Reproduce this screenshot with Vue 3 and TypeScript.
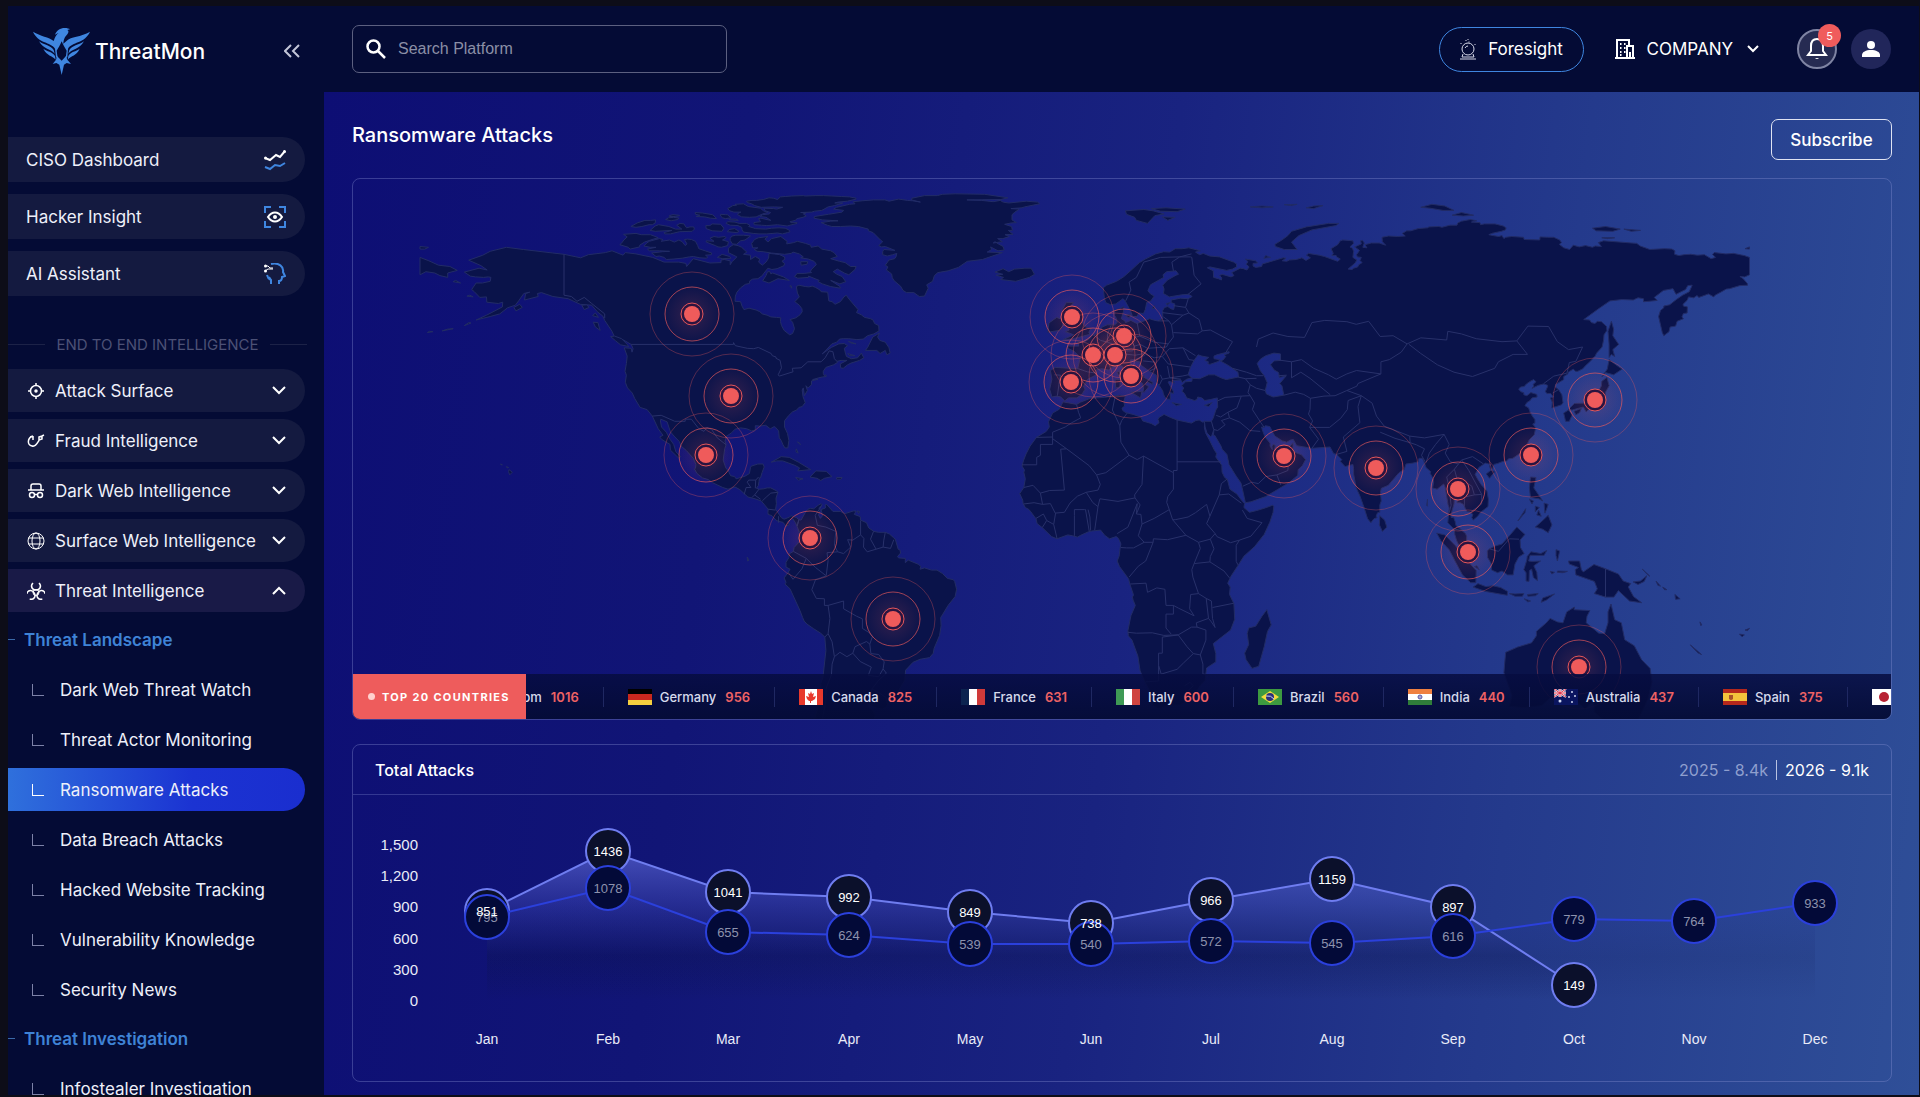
<script setup lang="ts">
interface Series { id: string; values: number[] }
interface TickerItem { code: string; name: string; value: number }

const months = ['Jan', 'Feb', 'Mar', 'Apr', 'May', 'Jun', 'Jul', 'Aug', 'Sep', 'Oct', 'Nov', 'Dec']
const ticks = [1500, 1200, 900, 600, 300, 0]
const current: Series = { id: 'current', values: [851, 1436, 1041, 992, 849, 738, 966, 1159, 897, 149] }
const previous: Series = { id: 'previous', values: [795, 1078, 655, 624, 539, 540, 572, 545, 616, 779, 764, 933] }

const px = (i: number): number => Math.round(134 + (i * 1328) / 11)
const py = (v: number): number => Math.round(205 - (v * 156) / 1500)
const linePath = (s: Series): string => s.values.map((v, i) => `${i ? 'L' : 'M'}${px(i)} ${py(v)}`).join('')
const areaPath = (s: Series): string => `${linePath(s)}L${px(s.values.length - 1)} 205L${px(0)} 205Z`

const topItems = [
  { id: 'ciso', label: 'CISO Dashboard' },
  { id: 'hacker', label: 'Hacker Insight' },
  { id: 'ai', label: 'AI Assistant' },
]
const sections = [
  { id: 'attack', label: 'Attack Surface' },
  { id: 'fraud', label: 'Fraud Intelligence' },
  { id: 'dark', label: 'Dark Web Intelligence' },
  { id: 'surface', label: 'Surface Web Intelligence' },
  { id: 'threat', label: 'Threat Intelligence', open: true },
]
const groups = [
  {
    title: 'Threat Landscape',
    links: ['Dark Web Threat Watch', 'Threat Actor Monitoring', 'Ransomware Attacks', 'Data Breach Attacks', 'Hacked Website Tracking', 'Vulnerability Knowledge', 'Security News'],
  },
  { title: 'Threat Investigation', links: ['Infostealer Investigation'] },
]
const activeLink = 'Ransomware Attacks'

const ticker: TickerItem[] = [
  { code: 'gb', name: 'United Kingdom', value: 1016 },
  { code: 'de', name: 'Germany', value: 956 },
  { code: 'ca', name: 'Canada', value: 825 },
  { code: 'fr', name: 'France', value: 631 },
  { code: 'it', name: 'Italy', value: 600 },
  { code: 'br', name: 'Brazil', value: 560 },
  { code: 'in', name: 'India', value: 440 },
  { code: 'au', name: 'Australia', value: 437 },
  { code: 'es', name: 'Spain', value: 375 },
  { code: 'jp', name: 'Japan', value: 338 },
]

// Marker centres on the map canvas
const markers: [number, number][] = [
  [339, 135], [378, 217], [353, 276], [457, 359], [540, 440],
  [719, 138], [771, 157], [740, 176], [762, 176], [718, 203], [778, 197],
  [931, 277], [1023, 289], [1242, 221], [1178, 276], [1105, 310], [1115, 373], [1226, 488],
]

// Land outlines as "lon,lat" lists, drawn on an equirectangular canvas
const land: string[] = [
  // North and Central America
  '-168,65.6 -164,66.5 -161.8,66.1 -163.5,67.1 -166.8,68.35 -163,69.5 -161,70.4 -156.6,71.3 -152,70.8 -144,70 -141,69.7 -136.5,68.9 -134.4,69.6 -129.8,70.1 -128,70.5 -125,69.5 -124.4,70.1 -121.5,69.8 -117,69 -115,68.3 -113.9,67.9 -109.9,67.9 -108,67.6 -107.8,66.9 -106,68.7 -101.5,67.7 -98.5,67.8 -98.5,68.4 -97.6,68.5 -96,68.2 -96,67.3 -95.5,68 -94.2,69.1 -96.5,70.1 -96.4,71.2 -95.2,71.9 -93.9,71.7 -92.9,71.3 -91.5,70.2 -92.4,69.7 -90.5,69.5 -90.5,68.5 -89.2,69.2 -88,68.6 -88.3,67.9 -87.3,67.2 -86.3,67.9 -85.6,68.8 -85.5,69.9 -84.1,69.8 -82.6,69.6 -81.3,69.1 -81.2,68.6 -82,68.1 -81.3,67.6 -81.4,67.1 -83.3,66.4 -84.7,66.2 -85.8,66.5 -87,65.2 -87.3,64.8 -88.5,64.1 -89.9,64 -90.7,63.6 -90.8,63 -91.9,62.8 -93.2,62 -94.2,61 -94.6,60.1 -94.7,58.9 -93.2,58.8 -92.8,57.8 -92.3,57 -90.9,57.3 -89,56.9 -88,56.5 -87.3,56 -86,55.7 -85,55.3 -83.4,55.2 -82.3,55.1 -82.4,54.3 -82.1,53.3 -81.4,52.2 -79.9,51.2 -79.1,51.5 -78.6,52.6 -79.1,54.1 -79.8,54.7 -78.2,55.1 -77.1,55.8 -76.5,56.5 -76.6,57.2 -77.3,58 -78.5,58.8 -77.3,59.9 -77.8,60.8 -78.1,62.3 -77.4,62.6 -75.7,62.3 -74.7,62.2 -73.8,62.4 -72.9,62.1 -71.7,61.5 -71.4,61.1 -69.6,61 -69.3,59 -68.4,58.8 -67.6,58.2 -66.2,58.8 -65.2,59.9 -64.6,60.3 -63.8,59.4 -61.4,57 -61.8,56.3 -60.5,55.8 -59.6,55.2 -58,54.9 -57.3,54.6 -56.9,53.8 -55.8,53.3 -55.7,52.1 -57.1,51.4 -58.8,51 -60,50.2 -61.7,50.1 -63.9,50.3 -65.4,50.3 -66.4,50.2 -67.2,49.5 -68.5,49.1 -70,47.7 -71.1,46.8 -68.6,48.3 -66.6,49.1 -65.1,49.2 -64.2,48.7 -65.1,48.1 -64.8,47 -64.5,46.2 -63.2,45.7 -61.5,45.9 -60.5,47 -59.8,45.9 -61,45.3 -63.3,44.7 -64.2,44.3 -65.4,43.5 -66.1,43.6 -66.2,44.5 -64.4,45.3 -66,45.3 -67.1,45.1 -67,44.8 -68,44.3 -70.1,43.7 -70.8,42.8 -70.8,42.3 -70.5,41.8 -70.1,42 -70,41.6 -71.1,41.5 -72,41.3 -73.7,40.9 -72.2,41 -74,40.6 -74,39.7 -74.9,39 -75.5,39.5 -75.1,38.4 -75.9,37.2 -76.2,39 -76.5,38.5 -76.3,37 -75.7,35.6 -76.5,34.7 -77.4,34.5 -78,33.9 -79.1,33.5 -80.3,32.5 -81.3,31.4 -81.3,30 -80.5,28.5 -80.1,26.9 -80.4,25.2 -81.2,25.2 -81.7,25.9 -82.2,26.9 -82.7,27.5 -82.9,29.1 -83.7,29.9 -84.1,30.1 -85.1,29.6 -85.3,29.7 -86.4,30.4 -88,30.2 -89.2,30.3 -89.2,29.3 -90.2,29.1 -91.6,29.6 -93.2,29.8 -94.7,29.5 -95.6,28.7 -97.1,27.8 -97.4,26.7 -97.1,25.9 -97.5,25 -97.9,22.4 -97.2,20.6 -96.5,19.9 -95.9,18.8 -94.8,18.6 -94.4,18.1 -92,18.7 -90.8,19.3 -90.5,20.7 -90.3,21 -88.5,21.5 -87.1,21.5 -86.8,20.8 -87.4,19.5 -87.8,18.3 -88.1,18.3 -88.2,17.5 -88.4,16.5 -88.9,15.9 -88.1,15.7 -86.9,15.8 -86,16 -85,16 -83.4,15.3 -83.1,15 -83.6,13.6 -83.5,12.4 -83.7,11.1 -82.2,9.2 -81.4,8.8 -79.9,9.3 -79.6,9.6 -78.1,9.2 -77.4,8.7 -77.9,7.2 -78.4,8.1 -79.1,9 -80.4,8.3 -80,7.5 -80.9,7.2 -81.7,8.1 -82.9,8.3 -83.6,8.6 -84.7,9.6 -85.7,9.9 -85.8,10.4 -85.7,11.1 -87.6,13 -89.3,13.5 -91.2,13.9 -93.4,15.6 -94.7,16.2 -96.6,15.7 -98,16.1 -100.8,17.2 -101.9,17.9 -103.5,18.3 -105,19.3 -105.7,20.4 -105.4,20.5 -105.3,21.4 -106,22.8 -107.9,24.6 -109.3,25.6 -109.8,26.7 -111.2,27.9 -112.2,28.9 -113.1,31.2 -114.8,31.8 -114.9,31.4 -114.6,30 -113.3,28.8 -112.3,27.2 -111.3,26 -110.7,24.3 -109.4,23.2 -110,22.9 -112.2,24.7 -112.3,26 -114.5,27.1 -115.1,27.7 -114.2,28.1 -115.5,29.6 -117.1,32.5 -118.5,34 -120.4,34.5 -121.9,36.6 -122.5,37.8 -123.8,39 -124.4,40.3 -124.1,41.9 -124.5,42.8 -124.1,44.6 -123.9,46.3 -124.7,48.2 -122.8,48.1 -122.6,47.2 -122.3,48 -122.8,49 -124.9,50 -127.4,50.8 -128,52 -130,54.5 -130.5,55.5 -132,56.5 -133.5,58 -136.6,58.2 -139.9,59.5 -144,60 -147.1,60.9 -148.2,60.7 -148,60 -151.7,59.2 -151.4,60.7 -150.3,61 -151.9,60.7 -153.3,59 -154.2,58 -156.3,57.4 -158.4,56 -161,55.4 -164.8,54.6 -162,55.7 -157.7,57.6 -157.6,58.7 -158.8,58.4 -161.9,58.7 -162,59.9 -163.8,59.8 -165.3,61.1 -166,61.6 -164.8,63.1 -163.1,63.1 -161,63.5 -160.8,64.4 -161.5,64.5 -162.8,64.4 -165,64.5 -166.4,64.7',
  // Canadian Arctic
  '-62.2,66.2 -63.9,65 -65.1,65.4 -67,66.3 -68.1,65.7 -67.1,65.1 -65.7,64.6 -64.7,63.4 -66.3,62.9 -68.8,63.7 -66.3,62.3 -66.2,61.9 -68.9,62.3 -71,62.9 -72.2,63.4 -71.9,63.7 -74.8,64.7 -74.8,64.4 -77.7,64.2 -78.6,64.6 -77.9,65.3 -76,65.3 -74,65.5 -74.3,65.8 -73.9,66.3 -72.7,67.3 -72.9,67.7 -73.3,68.1 -74.8,68.6 -76.9,68.9 -76.2,69.1 -77.3,69.8 -79,70.2 -79.5,69.9 -81.3,69.7 -84.9,70 -87.1,70.3 -88.7,70.4 -89.5,70.8 -88.5,71.2 -89.9,71.2 -90.2,72.2 -89.4,73.1 -88.4,73.5 -85.8,73.8 -86.6,73.2 -85.8,72.5 -84.8,73.3 -82.3,73.8 -80.6,72.7 -80.7,72.1 -78.8,72.4 -77.8,72.7 -75.6,72.2 -74.2,71.8 -74.1,71.3 -72.2,71.6 -71.2,70.9 -68.8,70.5 -67.9,70.1 -67,69.2 -68.8,68.7 -66.4,68.1 -64.9,67.8 -63.4,66.9 -61.9,66.9',
  '-114.2,73.1 -114.7,72.7 -112.4,73 -111.1,72.5 -109.9,73 -109,72.6 -108.2,71.7 -107.7,72.1 -108.4,73.1 -107.5,73.2 -106.5,73.1 -105.4,72.7 -104.8,71.7 -104.5,71 -102.8,70.5 -101,70 -101.1,69.6 -102.7,69.5 -102.1,69.1 -102.4,68.8 -104.2,68.9 -106,69.2 -107.1,69.1 -109,68.8 -111.5,68.6 -113.3,68.5 -113.9,69 -115.2,69.3 -116.1,69.2 -117.3,70 -114.3,70.3 -112.4,70.4 -115.1,70.5 -117.9,70.5 -118.4,70.9 -116.1,71.3 -117.7,71.3 -119.4,71.6 -118.6,72.3 -117.9,72.7 -115.2,73.3',
  '-125.5,72.2 -124.8,73 -123.9,73.7 -124.9,74.3 -121.5,74.5 -120.1,74.2 -117.6,74.2 -116.6,73.9 -115.5,73.5 -116.8,73.2 -119.2,72.5 -120.5,71.8 -120.5,71.4 -123.1,70.9 -123.6,71.3 -125.9,71.9',
  '-100.4,73.8 -99.2,73.6 -97.4,73.8 -97.1,73.5 -98.1,73 -96.5,72.6 -96.7,71.7 -98.4,71.3 -99.3,71.4 -100,71.7 -102.5,72.5 -102.5,72.8 -100.4,72.7 -101.5,73.4',
  '-93.2,72.8 -94.3,72 -95.4,72.1 -96,72.9 -96,73.4 -95.5,73.9 -94.5,74.1 -92.4,74.1 -90.5,73.9 -92,73',
  '-99.5,69 -98.2,69.7 -96.2,69.2 -95.8,68.8 -98,68.7',
  '-108.2,76.2 -107.8,75.8 -106.9,76 -105.9,76 -105.7,75.5 -106.3,75 -109.7,74.9 -112.2,74.4 -113.7,74.4 -113.9,74.7 -111.8,75.2 -116.3,75 -117.7,75.2 -116.3,76.2 -115.4,76.5 -112.6,76.1 -110.8,75.5 -109.1,75.5 -110.5,76.4 -109.6,76.8 -108.5,76.7',
  '-98.2,75 -100.9,75.1 -102.5,75.6 -102.6,76.3 -101.5,76.3 -100.9,76.7 -98.6,76.6 -97.7,75.7',
  '-93.6,75 -94.2,74.7 -96.8,74.9 -96.3,75.4 -94.8,75.6',
  '-89.2,75.6 -86.4,75.5 -84.8,75.7 -82.8,75.8 -81.1,75.7 -80.1,75.3 -79.8,74.9 -80.5,74.7 -81.9,74.4 -83.2,74.6 -86.1,74.4 -88.2,74.4 -89.8,74.5 -92.4,74.8 -92.8,75.4 -92.9,75.9 -93.9,76.3 -96,76.4 -97.1,76.8 -96.7,77.2 -94.7,77.1 -93.6,76.8 -91.6,76.8 -90.7,76.4 -91,76.1 -89.8,75.8',
  '-116.2,77.6 -116.3,76.9 -117.1,76.5 -118,76.5 -119.9,76.1 -121.5,75.9 -122.9,76.1 -121.2,76.9 -119.1,77.5 -117.6,77.5',
  '-110.2,77.7 -112,77.4 -113.5,77.7 -112.7,78.1 -111.3,78.2 -109.9,78',
  '-109.7,78.6 -110.9,78.4 -112.5,78.4 -112.5,78.6 -111.5,78.8 -110,78.7',
  '-95.8,78.1 -97.3,77.9 -98.1,78.1 -98.6,78.5 -98.6,78.9 -97.3,78.8 -96.8,78.8',
  '-100.1,78.3 -99.7,77.9 -101.3,78 -102.9,78.3 -105.2,78.4 -104.2,78.7 -105.4,78.9 -105.5,79.3 -103.5,79.2 -100.8,78.8',
  '-93.8,77.5 -96.1,77.6 -96.4,77.8 -94.4,77.8',
  '-87,79.7 -85.8,79.3 -87.2,79 -89,78.3 -90.8,78.2 -92.9,78.3 -94,78.8 -93.9,79.1 -93.1,79.4 -95,79.4 -96.1,79.7 -96.7,80.2 -95.3,80.9 -94.3,81 -94.7,81.2 -92.4,81.3 -91.1,80.7 -87.8,80.3',
  '-68.5,83.1 -65.8,83 -63.7,82.9 -61.9,82.6 -61.9,82.4 -64.3,81.9 -66.8,81.7 -67.7,81.5 -65.5,81.5 -67.8,80.9 -69.5,80.6 -71.2,79.8 -73.2,79.6 -73.9,79.4 -76.9,79.3 -75.5,79.2 -76.2,79 -75.4,78.5 -76.3,78.2 -77.9,77.9 -78.4,77.5 -79.8,77.2 -79.6,77 -77.9,77 -77.9,76.8 -80.6,76.2 -83.2,76.5 -86.1,76.3 -87.6,76.4 -89.5,76.5 -89.6,77 -87.8,77.2 -88.3,77.9 -87.7,78 -85,77.5 -86.3,78.2 -88,78.4 -87.2,78.8 -85.4,79 -85.1,79.3 -86.5,79.7 -86.9,80.3 -84.2,80.2 -83.4,80.1 -81.8,80.5 -84.1,80.6 -87.6,80.5 -89.4,80.9 -90.2,81.3 -91.4,81.6 -91.6,81.9 -90.1,82.1 -88.9,82.1 -87,82.3 -85.5,82.7 -84.3,82.6 -83.2,82.3 -82.4,82.9 -81.1,83 -79.3,83.1 -76.2,83.2 -75.7,83.1 -72.8,83.2 -70.7,83.2',
  '-85.9,65.7 -85.2,65.7 -85,65.2 -84.5,65.4 -81.6,64.5 -80,63.7 -83.1,64.1 -85.5,63.1 -87.2,63.6 -86.3,64.8',
  '-79.9,62.4 -79.3,61.9 -79.5,62.5', '-76.9,68 -75,68 -75.2,67.4 -76.8,67.2',
  '-55.6,51.6 -56.1,50.7 -55.5,49.9 -54,49.5 -53,48.2 -52.7,47 -53.6,46.6 -54,47.6 -55.4,46.9 -56.3,47.6 -59.4,47.6 -58.8,48.3 -57.4,50.7',
  '-123.5,48.5 -125.7,48.9 -127,49.8 -128.4,50.8 -127.3,50.9 -125.4,50.3 -123.9,49',
  '-131.5,53 -131.2,52.2 -132.5,53 -133.1,54.1 -131.8,54', '-134.2,57.5 -135.5,57 -136.2,58 -134.9,58.1', '-132.5,56.2 -131.7,55.2 -133.3,55.6',
  '-154,56.7 -152.3,57.5 -153,58.2 -154.6,57.5', '-166.5,60.3 -165.6,59.9 -167.3,60.1',
  '-171,63.4 -169,63.1 -170.4,63.7', '-168,53.3 -166.2,53.9 -166.8,54', '-174,52.1 -171,52.6 -172.5,52.5', '-178,51.7 -176.5,51.9 -177.5,52',
  '-64,49.7 -61.9,49.1 -63.3,49.3', '-64.2,46.9 -62.2,46.4 -63.6,46.4',
  // Greenland and Iceland
  '-46.8,82.6 -43.4,83.2 -39.9,83.2 -38.6,83.5 -35.1,83.6 -27.1,83.5 -20.8,82.7 -22.7,82.3 -31.9,82.2 -27.9,82.1 -24.8,81.8 -22.9,82.1 -22.1,81.7 -20.6,81.5 -15.8,81.9 -12.8,81.7 -12.2,81.3 -16.3,80.6 -17,80.4 -20,80.2 -17.7,80.1 -18.9,79.4 -19.7,78.8 -19.7,77.6 -18.5,77 -20,76.9 -21.7,76.6 -19.8,76.1 -19.6,75.2 -20.7,75.2 -19.4,74.3 -21.6,74.2 -20.4,73.8 -22.2,73.3 -23.6,73.3 -22.3,72.6 -24.8,72.3 -24.3,72.6 -23.4,72.1 -22.1,71.5 -21.8,70.7 -23.5,70.5 -25.5,71.4 -25.2,70.8 -26.4,70.2 -22.3,70.1 -27.7,68.5 -31.8,68.1 -34.2,66.7 -37,65.9 -39.8,65.5 -40.7,64.8 -41.2,63.5 -42.8,62.7 -42.4,61.9 -43.4,60.1 -44.8,60 -46.3,60.9 -48.3,60.9 -49.2,61.4 -49.9,62.4 -51.6,63.6 -52.1,64.3 -52.3,65.2 -53.7,66.1 -53.3,66.8 -54,67.2 -53,68.4 -51.5,68.7 -51.1,69.1 -50.9,69.9 -52,69.6 -53.5,69.3 -54.7,69.6 -54.7,70.3 -54.4,70.8 -51.4,70.6 -54,71.5 -55,71.4 -55.8,71.7 -54.7,72.6 -55.3,73 -57.3,74.7 -58.6,75.1 -58.6,75.5 -61.3,76.1 -63.4,76.2 -66.1,76.1 -68.5,76.1 -69.7,76.4 -71.4,77 -68.8,77.3 -66.8,77.4 -71,77.6 -73.3,78 -73.2,78.4 -69.4,78.9 -65.7,79.4 -65.3,79.8 -68,80.1 -67.2,80.5 -63.7,81.2 -62.2,81.3 -62.7,81.8 -60.3,82 -57.2,82.2 -54.1,82.2 -53,81.9 -50.4,82.4 -48,82.1 -46.6,82 -44.5,81.7 -46.9,82.2',
  '-14.5,66.5 -13.6,65.1 -15,64.4 -18.7,63.5 -22.8,63.9 -22,64.4 -24,64.9 -22.2,65.1 -24.3,65.6 -22.1,66.4 -20.6,65.7 -19,66.3 -16.2,66.5',
  // Caribbean and Hawaii
  '-84.9,21.9 -82.2,23.2 -80,23 -77.5,21.9 -74.2,20.2 -77.7,19.9 -77.2,20.6 -78.5,21.2 -81.8,22.2 -83.4,22.2', '-74.4,18.5 -72.8,19.9 -70,19.8 -68.4,18.6 -70.5,18.2 -71.5,17.7 -72.5,18.2', '-78.3,18.4 -76.3,18.1 -77.5,17.8', '-67.2,18.4 -65.7,18.4 -66,18 -67.2,18', '-78.1,25 -77.6,24 -78.2,24.3', '-77.8,26.6 -77.1,26.2 -77,25.9',
  '-155.9,20.2 -155,19.6 -155.7,19 -156,19.7', '-156.6,20.9 -156,20.7 -156.4,20.6', '-158.2,21.5 -157.7,21.3 -158,21.3', '-91.4,0.1 -90.9,-0.6 -91.3,-0.8', '-61.7,10.7 -61,10.6 -61.2,10.1',
  // South America
  '-77.4,8.7 -76.8,8.6 -75.5,10.6 -74.9,11.1 -74.2,11.3 -73.4,11.2 -72.2,12 -71.4,12.4 -71.1,12.1 -72,11.4 -71.6,10.9 -72.1,9.8 -71.6,9 -71,9.6 -71.4,11 -70.2,11.4 -70.3,12.1 -69.9,12.2 -68.2,10.6 -66.2,10.6 -64.9,10.1 -62.7,10.7 -61.9,10.7 -62.4,9.9 -60.8,9.4 -60.7,8.6 -59.1,8 -58.5,6.8 -57.1,6 -55.9,5.8 -54,5.8 -52.9,5.4 -51.8,4.6 -51.3,4.2 -50.5,1.9 -50,1.7 -49.9,1 -50.7,0.2 -50.4,-0.1 -48.6,-0.2 -48.6,-1.2 -47.8,-0.6 -44.9,-1.6 -44.4,-2.1 -44.6,-2.7 -43.4,-2.4 -41.5,-2.9 -40,-2.9 -38.5,-3.7 -37.2,-4.8 -35.6,-5.1 -35.2,-5.5 -34.7,-7.3 -35.1,-9 -37,-11 -38.4,-13 -39,-13.8 -38.9,-15.7 -39.3,-17.9 -40.8,-20.9 -41,-22 -42,-23 -44.6,-23.4 -46.5,-24.1 -48.5,-25.9 -48.7,-28.2 -50.7,-31 -52.3,-32.2 -53.8,-34.4 -54.9,-34.9 -57.1,-34.4 -58.4,-33.9 -58.5,-34.4 -57.2,-35.3 -56.7,-36.4 -57.5,-38 -73.5,-38 -73.2,-37.1 -72.6,-35.5 -71.4,-32.4 -71.5,-29 -70.9,-27.6 -70.1,-21.4 -70.4,-18.3 -71.5,-17.4 -73.4,-16.4 -75.2,-15.3 -76,-14.6 -76.4,-13.8 -77.1,-12.2 -79.8,-7.2 -81.2,-6.1 -80.9,-5.7 -81.4,-4.7 -80.3,-3.4 -79.8,-2.7 -80.9,-2.2 -80.9,-1.1 -80.1,0 -80.1,0.8 -78.9,1.4 -78.7,2.3 -77.1,3.8 -77.5,4.1 -77.3,5.8 -77.9,7.2',
  // Africa and Madagascar
  '-5.9,35.8 -2.2,35.2 -1.2,35.7 1.5,36.6 5.3,36.8 9.5,37.3 11,37.1 10.6,35.9 10.8,34.8 10.1,34.3 10.3,33.8 11.1,33.3 13.1,32.9 15.2,32.3 15.7,31.4 18,30.8 19.1,30.3 20.1,31 19.8,31.8 20.1,32.2 21.5,32.9 23.2,32.2 25,31.6 28.9,30.9 30.1,31.5 31,31.6 32,31.1 32.5,31.3 32.4,29.9 32.7,28.7 33.9,26.8 35.1,24.7 35.7,23.9 35.5,23.1 37.1,21.2 37.2,19.6 37.9,18.4 38.6,18 39.3,15.7 41.2,14.6 42.3,13.3 43.3,12.4 43.1,11.5 44.6,10.4 46.6,10.8 48.9,11.4 50.8,12 51.2,11.8 51,10.4 50.1,8.1 48.6,5.3 46,2.5 43.1,0.3 41.6,-1.7 39.6,-4.3 38.7,-5.9 39.4,-6.8 39.2,-8.5 40.4,-10.6 40.6,-14.2 39.5,-16.7 36.3,-18.8 34.8,-19.8 35.5,-22.1 35.5,-24 33,-25.4 32.9,-26.2 32.6,-28.3 31.3,-29.4 30.1,-31.1 28.2,-32.8 25.8,-33.9 22.5,-34 20,-34.8 18.4,-34 18.2,-31.7 17.1,-29.9 16.3,-28.6 15,-26.1 14.4,-22.7 12.8,-19 11.8,-18 11.7,-16.8 12.5,-13.4 13.7,-11 13.1,-9.8 12.9,-9.1 13.2,-8.6 12.2,-6.1 11.9,-5 11.1,-4 9.4,-2.1 8.8,-0.8 9.3,0.3 9.6,2.3 9.8,3.1 9.4,3.9 8.9,4.6 8.5,4.8 6.7,4.3 5.4,5.1 4.3,6.3 1.9,6.1 1,5.9 -1.1,5.1 -2,4.7 -3.3,5 -4.6,5.2 -7.5,4.3 -9,4.8 -11.4,6.8 -12.9,7.8 -13.2,8.9 -13.7,9.5 -14.6,10.5 -15.1,11 -16.1,11.5 -16.7,12.4 -16.8,13.2 -17.6,14.7 -16.5,16.1 -16.1,18.1 -16.5,19.6 -16.3,20.1 -17,21 -16.6,22.2 -15.9,23.8 -14.8,25.6 -13.1,27.6 -10.4,29 -9.6,30 -9.8,31.2 -8.7,33.2 -6.9,34.1',
  '49.3,-12 50.5,-15.5 49.5,-17 48.6,-20.5 47.1,-25 45.3,-25.5 43.7,-23.5 43.3,-22 44.4,-20 44,-17.5 44.4,-16.2 46.3,-15.8 48,-13.5',
  // Eurasia, with the Caspian Sea left open
  '-9.5,38.7 -8.9,41 -9.3,43 -8,43.7 -1.9,43.4 -1.2,46 -2.9,47.4 -4.6,48.1 -4.5,48.6 -1.6,48.6 -1.9,49.7 -1,49.4 0.2,49.7 1.6,50.5 1.9,51 3.8,51.6 4.7,53 6.1,53.5 8.1,53.5 8.8,54 8.6,54.9 8.1,55.6 8.1,56.8 9.4,57.2 10.6,57.7 10.5,56.6 10.3,56 9.9,54.9 10.9,54.4 11,54 12.5,54.5 14.1,53.8 16.4,54.5 17.6,54.9 18.6,54.6 19.7,54.4 21.1,54.9 21.1,56.8 21.6,57.5 22.5,57.7 23.3,57.2 24.1,57 24.4,58.3 23.4,58.6 23.4,59.2 25.9,59.6 28,59.5 29.1,60 28.1,60.5 26.3,60.4 22.9,59.9 21.3,60.7 21.5,61.7 21.1,62.6 22.4,63.8 24.7,64.9 25.4,65.1 24.7,65.9 22.2,65.7 21.2,65 21.4,64.4 17.8,62.7 17.1,61.3 17.8,60.6 18.8,60.1 17.9,59 16.8,58.7 16.4,57 15.9,56.1 14.7,56.2 14.1,55.4 12.9,55.4 12.6,56.3 11,58.9 10.4,59.5 8.4,58.3 7,58.1 5.7,58.6 5.3,59.7 5,62 5.9,62.6 8.6,63.5 10.5,64.5 12.4,65.9 14.8,67.8 16.4,68.6 19.2,69.8 21.4,70.3 23,70.2 24.5,71 26.4,71 28.2,71.2 31.3,70.5 30,70.2 31.1,69.6 32.1,69.9 33.8,69.3 36.5,69.1 40.3,67.9 41.1,67.5 41.1,66.8 40,66.3 38.4,66 33.9,66.8 33.2,66.6 34.8,65.9 34.9,64.4 36.2,64.1 37,63.8 37.1,64.3 36.5,64.8 37.2,65.1 39.6,64.5 40.4,64.8 39.8,65.5 42.1,66.5 43,66.4 43.9,66.1 44.5,66.8 43.7,67.4 44.2,68 43.5,68.6 46.3,68.2 46.8,67.7 45.6,67.6 45.6,67 46.3,66.7 47.9,66.9 48.1,67.5 50.2,68 53.7,68.9 54.5,68.8 53.5,68.2 54.7,68.1 55.4,68.4 57.3,68.5 58.8,68.9 59.9,68.3 61.1,68.9 60,69.5 60.6,69.9 63.5,69.5 64.9,69.2 68.5,68.1 69.2,68.6 68.2,69.1 68.1,69.4 66.9,69.5 67.3,69.9 66.7,71 68.5,71.9 69.2,72.8 69.9,73 72.6,72.8 72.8,72.2 71.8,71.4 72.5,71.1 72.8,70.4 72.6,69 73.7,68.4 73.2,67.7 71.3,66.3 72.4,66.2 72.8,66.5 73.9,66.8 74.2,67.3 75.1,67.8 74.5,68.3 74.9,69 73.8,69.1 73.6,69.6 74.4,70.6 73.1,71.4 74.9,72.1 74.7,72.8 75.2,72.9 75.7,72.3 75.3,71.3 76.4,71.2 75.9,71.9 77.6,72.3 79.7,72.3 81.5,71.8 80.6,72.6 80.5,73.6 82.3,73.9 84.7,73.8 86.8,73.9 86,74.5 87.2,75.1 88.3,75.1 90.3,75.6 92.9,75.8 93.2,76 95.9,76.1 96.7,75.9 98.9,76.4 100.8,76.4 101,76.9 102,77.3 104.4,77.7 106.1,77.4 104.7,77.1 107,77 107.2,76.5 108.2,76.7 111.1,76.7 113.3,76.2 114.1,75.8 113.9,75.3 112.8,75 110.2,74.5 109.4,74.2 110.6,74 112.1,73.8 113,74 113.5,73.3 114,73.6 115.6,73.8 118.8,73.6 119,73.1 123.2,73 123.3,73.7 125.4,73.6 127,73.6 128.6,73 129.1,72.4 128.5,72 129.7,71.2 131.3,70.8 132.3,71.8 133.9,71.4 135.6,71.7 137.5,71.3 138.2,71.6 139.9,71.5 139.1,72.4 140.5,72.8 149.5,72.2 150.4,71.6 153,70.8 157,71 159,70.9 159.8,70.5 159.7,69.7 160.9,69.4 162.3,69.6 164.1,69.7 165.9,69.5 167.8,69.6 169.6,68.7 170.8,69 170,69.7 170.5,70.1 173.6,69.8 175.7,69.9 178.6,69.4 180,69 180,65 178.7,64.5 177.4,64.6 178.3,64.1 179.4,63 179.5,62.6 177.4,62.5 174.6,61.8 173.7,61.7 172.2,61 170.7,60.3 170.3,59.9 168.9,60.6 166.3,59.8 165.8,60.2 164.9,59.7 163.5,59.9 163.2,59.2 162,58.2 162.1,57.8 163.2,57.6 163.1,56.2 162.1,56.1 161.7,55.3 162.1,54.9 160.4,54.3 160,53.2 158.5,53 158.2,51.9 156.8,51 156.4,51.7 156,53.2 155.4,55.4 155.9,56.8 156.8,57.4 156.8,57.8 158.4,58.1 160.2,59.3 161.9,60.3 163.7,61.1 164.5,62.6 163.3,62.5 162.7,61.6 160.1,60.5 159.3,61.8 156.7,61.4 154.2,59.8 155,59.1 152.8,58.9 151.3,58.8 151.3,59.5 149.8,59.7 148.5,59.2 145.5,59.3 142.2,59 139,57.1 135.1,54.7 136.7,54.6 137.2,54 138.2,53.8 138.8,54.3 139.9,54.2 141.3,53.1 141.4,52.2 140.6,51.2 140.5,50 140.1,48.4 138.6,47 138.2,46.3 136.9,45.1 135.5,44 134.9,43.4 133.5,42.8 132.9,42.8 132.3,43.3 130.9,42.6 130.8,42.2 129.7,41.6 129.7,40.9 127.5,39.8 127.4,39.2 128.3,38.6 129.2,37.4 129.5,35.6 129.1,35.1 126.5,34.4 126.6,35.7 126.1,36.7 126.9,36.9 126.2,37.7 125.2,37.7 124.7,38.1 125.4,39.4 125.3,39.6 124.3,39.9 122.9,39.6 121.1,38.9 121.6,39.4 121.4,39.8 122.2,40.4 121.6,40.9 120.8,40.6 119.6,39.9 119,39.3 118,39.2 117.5,38.7 118.1,38.1 118.9,37.9 118.9,37.4 119.7,37.2 120.8,37.9 122.4,37.5 122.5,36.9 121.1,36.7 120.6,36.1 119.7,35.6 119.2,34.9 120.2,34.4 120.6,33.4 121.2,32.5 121.9,31.7 121.9,30.9 121.3,30.7 122.1,29.8 121.7,28.2 120.4,27.1 119.6,25.7 118.7,24.5 117.3,23.6 115.9,22.8 114.8,22.7 114.2,22.2 113.2,22.1 111.8,21.6 110.8,21.4 110.4,20.3 109.9,20.3 109.6,21 109.9,21.4 108.5,21.7 106.7,20.7 105.7,19.1 106.4,18 107.4,16.7 108.9,15.3 109.3,13.4 109.2,11.7 107.2,10.4 106.4,9.5 105.2,8.6 104.8,9.2 105.1,9.9 104.3,10.5 103.5,10.6 103.1,11.2 102.6,12.2 101.7,12.6 100.8,12.6 101,13.4 100.1,13.4 100,12.3 99.2,10 99.2,9.2 99.9,9.2 100.3,8.3 100.5,7.4 101,6.9 101.6,6.7 102.1,6.2 103.1,5.5 103.4,4.9 103.4,3.4 104.2,1.3 103.5,1.2 101.3,2.8 100.7,3.9 100.2,5.3 100.1,6.5 99.7,6.8 98.3,8 98.7,11.4 98.4,12.1 97.6,16.1 97.2,16.9 95.4,15.7 94.2,16 94.5,17.3 94.3,18.2 93.5,19.4 93.7,19.7 92.4,20.7 92,21.7 91.8,22.2 91.4,22.8 90.5,22.8 90.3,22 88.9,21.7 87,21.5 86.5,20.2 85.1,19.5 82.2,16.6 80.3,15.9 80.1,15 80.2,13.8 80.3,13 79.9,12.1 79.9,10.4 79.3,10.3 78.9,9.5 79.2,9.2 78.3,8.9 77.5,8 76.6,8.9 75.7,11.3 74.6,14 73.5,16 72.8,19.2 72.8,20.4 72.6,21.4 70.5,20.9 69.2,22.1 69.6,22.5 68.2,23.7 67.4,23.9 66.4,25.4 61.5,25.1 57.4,25.7 56.5,27.1 55.7,27 54.7,26.5 53.5,26.8 51.5,27.9 50.9,28.8 50.1,30.1 48.9,30.3 48.6,29.9 47.9,30 48.1,29.3 48.8,27.7 50.2,26.3 50.2,25.6 50.8,24.8 50.7,25.5 51,26 51.6,25.8 51.4,24.6 51.8,24.1 54,24.1 55.4,25.4 56.4,26.4 56.4,24.9 56.8,24.2 58.7,23.6 59.8,22.5 58.9,21.1 57.8,20.2 57.7,18.9 56.3,17.9 55.3,17.2 52.2,15.6 49,14 45,12.8 43.5,12.6 42.8,15.3 42.3,17.1 41,18.7 39.1,21.3 38.5,23.7 37.2,24.9 36.9,25.6 35.2,28.1 34.8,28 35,29.5 34.4,28 34.1,27.8 33.1,28.6 32.6,30 32.4,31.3 34.3,31.3 34.8,32.1 35.5,33.9 36,34.6 35.9,36.7 34,36.3 32.5,36.1 31.7,36.7 30.6,36.9 30.4,36.3 29.7,36.1 27.6,36.7 27,37.7 26.3,38.2 26.8,39 26.2,39.5 27.3,40.4 29,40.5 29.1,41.2 31.1,41.1 33.5,42 35.2,42 36.9,41.3 38.3,40.9 41.6,41.5 41.5,42.6 39,44.1 36.7,45.2 37.4,45.4 38.2,46.2 37.7,46.6 39.1,47 39.1,47.3 35.8,46.6 35,46.3 35,45.7 36.5,45.5 36.3,45.1 33.9,44.4 33.3,44.6 33.5,45 32.5,45.3 33.6,46 31.7,46.3 30.7,46.6 29.6,45.3 28.6,43.7 28,42 29,41.3 27.6,41 26.4,40.2 26,40.8 23.7,40.7 24.4,40.1 22.8,40.5 22.6,40.3 23.3,39.2 24,38.2 24,37.7 23.1,37.9 23.2,36.4 22.5,36.4 21.7,36.8 21.3,37.6 21.1,38.3 20.2,39.5 19.4,40.3 19.4,41.9 17.5,42.8 15.2,44.2 14.9,45 13.7,45.1 13.6,45.5 12.3,45.4 12.3,44.6 13.5,43.6 14,42.7 15.1,42 16.2,41.7 15.9,41.5 18.5,40.2 18.3,39.8 16.9,40.4 16.4,39.8 17.2,39.4 17.1,39 16.1,38 15.7,38 15.9,38.7 15.7,40 14.1,40.8 12.1,41.7 10.5,42.9 10.2,43.9 8.9,44.4 7.4,43.7 6.5,43.1 4.6,43.4 3.1,43.1 3,41.9 0.8,41 -0.3,39.3 0.1,38.7 -0.7,37.6 -2.1,36.7 -4.4,36.7 -5.4,36 -6.5,36.9 -7.5,37.1 -8.9,36.9|46.7,44.6 47.6,45.6 49,46.4 51.2,47 53,46.8 53,45.3 51.3,45.2 50.3,44.3 51.3,43.1 52.5,42.5 52.7,41.4 54.5,41.7 52.8,40 53.4,39.5 53.9,37.3 51,36.9 49.2,37.6 48.9,38.4 49.4,40.2 48.6,41.8 47.5,43',
  '-180,69 -177.6,68.2 -175,67.2 -171.9,66.9 -169.9,66 -172.5,65.4 -172.5,64.4 -174.6,64.8 -176,65.4 -178.4,65.7 -180,65', '-180,71.5 -177.7,71.3 -178.7,70.9 -180,70.9', '178.8,71 180,71.4 180,70.9',
  // Arctic islands of Eurasia
  '11,79.7 16,80 18.5,79.7 21.5,79 19,78.6 17,76.8 14,77.5 13.5,78.2 11.3,78.9', '18,80.2 22,80.4 27.2,80.1 25,79.5 20.5,79.6', '21,78.3 24.5,78.2 22.5,77.5',
  '51.6,71.5 51.5,72 53.4,73 55,74 56,75 60,76 66,76.8 68.8,76.8 68,76.3 61.5,75.3 58,74 56,72.5 57.5,70.8 54,70.8',
  '44.8,80.6 48,80.8 51,80.6 48,80.4', '54,81.1 57.5,81.2 56,80.9', '60,80.4 62,80.8 64.5,80.9 62,80.2',
  '91,80.5 94,81.2 97.5,80.8 100,79.8 97,79.8 93.5,80.3', '99.5,78.7 102,79.3 105.3,78.7 102.5,78.5',
  '137.5,75.7 141,76.1 145,75.5 143,75 138.5,75.1', '146,75.5 150.5,75.2 148,75', '140,73.5 143.5,73.5 141.5,73.3', '49,69.4 50.3,69 48.5,68.8',
  // Europe islands
  '-5,58.6 -3,58.6 -4,57.6 -2,57.6 -3.1,56 -1.1,54.6 0.2,53 1.7,52.7 1.1,51.8 1.4,51.3 -0.8,50.8 -3.6,50.2 -5.8,50.1 -3,51.2 -5.2,51.9 -4.2,52.3 -4.6,53.3 -3,53.9 -3.6,54.6 -5,54.8 -4.8,55.5 -5.6,56.3 -6.1,57',
  '-6,53.2 -6.8,52.2 -10,51.8 -9.7,53.9 -7.6,55.2 -5.8,54.6', '8.2,40.9 9.7,40.9 9.5,39.2 8.4,39', '8.7,42.5 9.4,43 9.4,41.5', '12.5,38 15.5,38.2 15.1,36.7', '23.6,35.6 26.2,35.2 24.8,34.9', '32.4,35 34.5,35.6 33.6,34.7', '11,55.6 12.5,56 12.1,55', '18.2,57.3 19,57.9 18.8,57.2', '22,58.4 23.2,58.6 22.3,58',
  // Asia islands
  '141.4,41.4 142,39.5 141,38 140.8,35.8 139.8,35 137,34.6 135.8,33.5 135,34.6 132,33.9 131,34 132.6,35.4 135.7,35.5 136.8,37.3 138.8,37.8 139.9,39.4 140,40.5',
  '140,41.5 141,42.5 143.2,42 145.5,43.3 144.3,44 142,45.5 141.5,43.3', '129.7,33.2 131,33.9 132,32.8 131.2,31.3 130.2,31.3', '132.5,33.6 134.5,34.3 134,33.3 133,32.8',
  '142,46 142,49 141.7,52 142.6,54.3 143.2,52.5 143,51 144.6,49 143,47.8 143.5,46.2 142.6,46.7', '120.1,23 121,25 122,25 121,22', '108.7,19.2 110,20.1 111,19.7 109.6,18.2',
  '120.4,16 120.7,18.5 122.2,18.4 121.6,16 124,13 123,13.5 120.7,13.8', '122,7 124,8.5 125.5,9.7 126.5,7.5 125.5,5.7 124,6.5', '124.4,12.5 125.5,12.2 125,11 124.6,10.2', '122,11.8 123.1,11.5 122,10.5', '122.9,10.9 123.6,9.5 122.4,9.8', '117.3,8.4 119.4,11.2 119.2,10.3', '120.4,13.4 121.5,13 121.1,12.3',
  '109.6,2 111.3,2.7 113,3.1 115,5 117,7 119.2,5.3 117.9,4 118,2.3 119,0.9 117.5,0.1 116.5,-1.5 116,-4 114.5,-4 113,-3.1 111.8,-3.5 110.2,-2.9 110,-1.3 109.1,0 109,1.5',
  '95.3,5.6 97.5,5.2 100.4,2.7 103.7,-0.8 106,-3 105.9,-5.8 104.5,-5.8 102.3,-4 100.4,-1 98.7,1.8 96.5,3.8',
  '105.2,-6.8 106.5,-6 108.6,-6.7 110.5,-6.5 112.6,-6.9 114.5,-7.8 114.4,-8.7 108.5,-7.8', '115,-8.3 116.5,-8.4 118.9,-8.3 118.5,-8.9 116.5,-8.9', '119.9,-8.5 122.8,-8.3 122,-8.8 120,-8.9', '124,-9.3 127.2,-8.4 125,-9.8 123.6,-10.3', '119,-9.5 120.7,-10 120,-10.2',
  '119.8,0.2 120.8,1.3 123.5,0.9 125.1,1.6 124.4,0.5 120.6,0.5 120.2,-0.8 121.2,-0.9 123.4,-0.8 121.6,-1.9 122.4,-3.4 122.6,-5.3 121.5,-4.6 121,-2.7 120.4,-3 120.3,-5.5 119.5,-5.4 119.5,-3.5 118.9,-2.8 119.7,-0.6',
  '127.6,1.8 128.6,1.5 128,-0.8 127.6,0.5', '128,-3.1 130.7,-3.2 129.5,-3.5 128,-3.4', '126.1,-3.2 127.2,-3.4 126.5,-3.8', '106.2,-1.9 106.8,-2.8 105.5,-2.1',
  '131,-0.8 134,-0.8 134.5,-2.8 135,-3.3 137.9,-1.6 141,-2.6 144.5,-3.8 145.8,-5.4 147.8,-6 147.2,-6.8 148.6,-9 150.8,-10.4 147.5,-10 144.5,-7.6 143.3,-9.1 141,-9.1 138,-8.3 138.8,-7.2 138,-5.5 133,-4 132.8,-2.8 133.7,-2.3 131.2,-1.5',
  '148.5,-5.6 150.5,-5.4 152.2,-4.2 151.5,-5.5 149.8,-6.2', '151,-2.7 153,-4.3 152,-3.6', '154.7,-5.4 155.9,-6.6 155.2,-6.4', '156.5,-6.8 157.6,-7.4 157,-7.4', '159.8,-8.5 161.2,-9.5 160,-9.6', '164,-20.1 167,-22.3 166,-21.9', '177.3,-17.6 178.6,-17.8 178,-18.2', '178.8,-16.7 180,-16.3 179.5,-16.8', '166.6,-14.8 167.1,-15.5 166.8,-15.6',
  '79.9,9.6 81.2,8.6 81.8,7 80.6,6 79.8,7.5', '92.8,13.4 92.8,11.8 92.6,12',
  // Australia
  '142.5,-10.7 143.5,-14.3 145.3,-15 146.2,-18.9 148.8,-20.3 150.8,-23.5 153.1,-25.5 153.6,-28.6 152.5,-32.5 150,-37 149.9,-38 147,-39 142,-38.5 138,-35.5 137.8,-32.8 135.5,-34.8 131.2,-31.5 126,-32.3 123.8,-34 119,-34.5 115,-34.2 115.7,-31.7 113.5,-26.5 113.7,-24.5 114,-21.8 117.2,-20.6 121,-19.6 122.3,-18 122.3,-17 125,-15 126,-14 128,-14.8 129.5,-15 130.5,-12.5 132.6,-11.4 132.5,-12 136.8,-12.2 136,-13.5 135.8,-15 139.2,-17.4 140.8,-17.5 141.7,-15 141.7,-12.5',
]

const borders: string[] = [
  '-122.8,49 -95.1,49 -95.1,49.4 -94.6,48.7 -91.4,48.1 -89.6,48 -88.4,48.3 -84.9,46.9 -84.6,46.4 -83.6,46.1 -83.6,45.8 -82.5,45.3 -82.1,43.6 -83,42 -82.7,41.7 -79,42.7 -79.2,43.5 -76.8,43.6 -75,45 -71.4,45 -70.3,45.9 -69.2,47.5 -68.2,47.3 -67.8,45.7 -67.1,45.1',
  '-141,69.7 -141,60.3 -139,60 -137.5,58.9 -135.5,59.8 -133.5,58.4 -130,56 -130,55', '-117.1,32.5 -114.7,32.7 -111,31.3 -108.2,31.3 -108.2,31.8 -106.5,31.8 -104.5,29.6 -103.1,29 -102.3,29.9 -101,29.4 -99.5,27.5 -97.1,25.9',
  '-92.2,14.5 -91.7,16.1 -90.4,16.1 -91.4,17.3 -91,17.8 -89.1,17.8 -89.2,15.9', '-88.3,18.5 -89.1,17.8', '-88.2,15.7 -89.4,14.4 -90.1,13.8', '-89.4,14.4 -87.8,13.4', '-87.3,13 -86.1,14 -85,14.8 -83.1,15', '-85.7,11.1 -83.7,10.9', '-82.9,9.5 -82.9,8',
  '-77.4,8.7 -77.9,7.2', '-71.3,11.8 -73,9.7 -72.4,7.4 -70.1,7 -67.4,6 -67.8,2.8 -66.9,1.3 -69.8,1.1 -69.5,-0.7 -70,-4.2 -72.9,-2.3 -75.4,-0.2 -78.9,1.4', '-75.4,-0.2 -76.6,-2.6 -79,-5 -80.3,-3.4', '-66.9,1.3 -65.3,0.9 -64,1.9 -63.4,2.4 -64.2,4.1 -62.8,4 -60.7,5.2 -60.7,8.5', '-60.7,5.2 -59.8,4.4 -59.9,2.4 -58.9,1.3 -56.5,1.9 -54.6,2.4 -52.6,2.1 -51.7,4.1', '-57.2,6 -58,4.2 -56.5,1.9', '-54,5.8 -54.4,4 -54.6,2.4',
  '-70,-4.2 -72.9,-5.1 -73.9,-7.4 -72.7,-9.4 -70.5,-9.5 -70.5,-11 -69.5,-11 -65.3,-10 -65.3,-11.8 -61.8,-13.5 -60.2,-14.1 -60.2,-16.3 -58.3,-17.3 -57.5,-18.2 -58.2,-19.9 -57.9,-22.1 -55.8,-22.3 -54.3,-24 -54.6,-25.6 -53.7,-26.6 -55.8,-28.2 -57.6,-30.2 -55.9,-31 -53.8,-32.2 -53.4,-33.7', '-69.5,-11 -69,-14 -69.5,-17.5 -70.4,-18.3', '-69.5,-17.5 -68.4,-19.4 -67.8,-22.8 -66.3,-21.8 -64.4,-22.8 -62.8,-22 -62.2,-20.5 -59.1,-19.3 -58.2,-19.9', '-62.8,-22 -60.8,-23.9 -57.8,-25.2 -58.6,-27.1 -55.8,-27.4 -54.6,-25.6', '-67.8,-22.8 -68.4,-24.5 -68.6,-27 -70,-30 -70.1,-33 -71,-37', '-57.6,-30.2 -58.2,-32.5 -58.4,-33.9',
  // Africa
  '-2.2,35.1 -1.7,33.4 -1.1,32.1 -3.7,30.9 -5.3,30 -8.7,28.8 -8.7,27.7 -13.1,27.6', '-8.7,27.7 -8.7,26 -12,26 -12,23.5 -13,23 -13,21.3 -17,21.3', '-8.7,27.3 -4.9,25 -6.5,24.9 -5.5,15.5 -9.5,15.4 -12,14.8 -14,16.6 -16.5,16.1', '-4.9,25 1.2,21.1 3.2,19 4.2,16.8 3.6,15.5 0.4,15 -2,14.1 -4,12.5 -5.5,10.4 -8,10.2 -9.3,12.4 -11.4,12.2 -12,14.8', '8.2,36.9 7.5,33.9 9.5,30.3 9.8,26.5 12,23.5 5.7,19.5 3.2,19', '11.5,33.2 10,31.5 9.5,30.3', '12,23.5 14.2,22.5 15.9,23.3 24,19.5 24,20 25,20 25,31.6', '25,22 36.9,22', '15.9,23.3 15.5,16.8 13.5,14.4 13.6,13.7 9,12.9 4.1,13.5 3.6,11.7 2.7,6.3', '3.6,11.7 2.2,12.6 0.4,15', '24,19.5 24,15.7 22.5,14 22.2,12.7 22.9,11 18.8,9 15.5,7.7 15.2,9.9 14,10 15,12.1 13.6,13.7', '14,10 14.2,12.4 11.7,7 8.8,5.5', '22.9,11 23.8,8.7 27.4,5.1 22.4,4.1 18.6,4.3 18.5,3.5 16.1,3.5 14.5,5 15.5,7.7', '23.8,8.7 24.5,8.7 28,9.3 30,10.3 33,12.2 33.9,9.5 36.4,14.4 37,17 38.5,18', '36.4,14.4 39,14.6 42.4,12.5', '33.9,9.5 33,7.8 35.3,5.5 35.8,4.8 39.5,3.4 41.9,4 45,4.9 48,8 44,9 42.7,10.9', '41.9,4 41,2.8 41,-0.9 41.5,-1.7', '35.3,5.5 34,4.2 30.8,3.5 27.4,5.1', '34,4.2 35,2 34,0.2 33.9,-1 37.7,-3.1 39.2,-4.7', '33.9,-1 29.6,-1.4 31.3,2.1 30.8,3.5', '29.6,-1.4 29,-2.8 29.3,-4.5 30.8,-8.3 28.7,-8.5 28.4,-11.8 29.6,-13.4 25.3,-11.6 24,-11 22,-11 21.7,-7.3 19.5,-7 17,-8 16.6,-5.9 12.3,-6.1', '30.8,-8.3 32.9,-9.4 33.5,-14 30.2,-15 30.4,-16 28.9,-16 25.3,-17.8 21.4,-17.9 18.3,-17.3 14,-17.4 11.7,-17.2', '34.6,-11.5 40.4,-10.5', '32.9,-9.4 34.3,-10 34.6,-14 35.3,-16.1 34.3,-14.8 33.5,-14', '24,-11 24,-13 22,-13 22,-16.2 23.4,-17.6', '25.3,-17.8 27.7,-20.5 29.4,-22.1 31.3,-22.4 32.8,-19 32.8,-16.7 30.4,-16', '29.4,-22.1 26.8,-24.2 25,-25.7 20.7,-26.8 20,-24.8 20,-28.4 16.5,-28.6', '20,-24.8 20,-22 21,-22 21,-18.3 25.3,-17.8', '31.3,-22.4 32,-24.5 32,-26.8 32.9,-26.9', '18.5,3.5 16.5,-0.8 14.5,-2 12,-4.5', '11.3,2.2 13.2,2.2 16.1,3.5', '11.3,2.2 9.7,2.3', '-2.8,5 -2.8,9.7 -2.8,11 0,11 0.2,11 1.2,6.1', '1.6,6.2 1.4,9.3 0.9,11', '-7.5,4.4 -8.4,7.6 -7.9,10.2', '-8.4,7.6 -10.3,8.5 -11.5,6.9', '-10.3,8.5 -11.2,10 -13.2,9', '-13.7,12.6 -16.6,12.3', '-11.4,12.2 -13.7,12.6', '27,-29.5 28.5,-28.7 29.4,-29.5 28,-30.6',
  // Europe
  '-8.2,42 -6.6,41.9 -7,39.7 -7.4,37.2', '-1.8,43.4 0.7,42.7 3.1,42.4', '2.5,51.1 4.3,49.9 6.1,49.5 8.2,48.9 7.6,47.6 6,46.3 7.1,45.5 7.5,43.8', '7.6,47.6 9.6,47.5 10.5,46.8 9,46 7.1,45.5', '9.6,47.5 13,47.5 13.5,48.6 12.2,50.3 14.9,50.9 14.2,53.9', '6.1,49.5 6.2,51.5 7.1,53.3', '10.5,46.8 13.7,46.5 16.1,46.9 17,48.1 15,49 13.5,48.6', '14.9,50.9 18.8,49.5 22.6,49.1 24,50.7 23.5,53.5 22.8,54.4 19.8,54.4', '17,48.1 22.1,48.4 22.6,49.1', '16.1,46.9 18.8,45.9 21,46.2 22.9,48', '13.7,45.5 16.3,46.5', '15.8,45.2 19,44.9 19.2,43.5 17.6,42.9', '21,46.2 22.6,44.5 28.6,43.8', '22.4,44 23,41.3 26.4,41.7 28,42', '20.5,42 21,41 20.2,39.6', '21,41 23,41.3 26,41', '22.9,48 26.6,48.2 28.2,45.5 29.6,45.3', '26.6,48.2 30,46.4', '23.5,53.5 26.6,55.7 28.2,56.2 27.3,57.5 28,59.4', '21,56.3 26.6,55.7', '21.3,55.3 22.8,54.4', '24,57.9 27.3,57.5', '24,51.7 30.6,51.4 31.8,52.1 34,52.3 40,49.6 38.2,47.1', '28.2,56.2 31,54.7 31.8,52.1', '28,60.5 31.5,62.9 29.6,64.9 29,69 28.6,69.1 25.7,69.1 23.6,67.9 24,65.9', '11.1,59 12.5,61.5 12,63.3 14,64.4 16,67.9 20.5,69 25.7,69.1 28.9,69.8',
  // Asia
  '41.5,41.5 43.5,41.1 44.8,39.7 44.2,37.9 44.8,37.2 42.4,37.1 38,36.8 36,36', '40,43.5 43.8,42.6 46.5,41.8 48.4,41.8', '43.5,41.1 46.5,41.2', '44.8,39.7 46.5,38.9 48.9,38.4', '44.8,37.2 46,35.5 45.4,34 47.7,31 48.5,30', '42.4,37.1 41.2,34.4 38.8,33.4 36.8,32.3 35.6,32.7', '38.8,33.4 39.2,32.1 42,31.1 44.7,29.2 47.5,29', '39.2,32.1 37,31.5 38,30.5 36,29.2 35,29.4', '34.3,31.3 34.9,29.5', '42.8,16.4 45.2,17.3 47,17 49,18.6 52,19 53.1,16.7', '52,19 55,20 55.2,22.7 52.6,22.9 51.6,24.1', '53.9,37.3 57,38 59.3,37.5 61.1,36.6 61,34 60.6,33 61.7,31.4 60.9,29.9 63.3,27.2 61.6,25.2', '61.1,36.6 64.8,37.1 67.8,37.2 71,38.4 74.9,37.2 71.3,36.1 71.1,34 69.3,32 66.3,29.9 60.9,29.9', '74.9,37.2 77.8,35.5 79,32.5 81.1,30.2 88,27.9 92,27.5 97.3,28.3', '74.9,37.2 74,34.7 74.5,31 70,27.7 71,24.4 68.2,23.7', '80,28.8 84,27.4 88.1,26.4 88,27.9', '88.1,26.4 89.8,25.9 92,25 91.2,23.5 92.2,22', '97.3,28.3 95,26 93.3,24 92.4,21.8', '97.3,28.3 98.7,26 97.6,24 99,22 101.2,21.5 102,22.4 105,23.2 108,21.5', '101.2,21.5 100.1,20.3 98,18.5 98.7,16 99.2,12 98.7,10.3', '100.1,20.3 101,17.5 102,18 104.8,16.4 105.5,14.4 107.5,14.5', '102.1,22.4 104,20 107.5,14.5 107.5,12.3 104.5,10.5', '105.5,14.4 102.8,13.9 102.8,11.8', '102.1,6.2 100.2,6.5', '52.5,45.4 56,45 56,41.3 58.5,42.6 61,41.2 66.5,37.4', '56,45 58.7,45.5 62,43.5 66,42 68.1,41 71,42.2 73.6,43 80.2,42.2 74,40 73.7,39.4 71,38.4', '54.7,41.9 52.5,41.8', '80.2,42.2 80.2,45 82.5,45.5 85.7,47.2 87.3,49.1', '46.5,48.4 47,50.2 51,51.6 55,50.8 59.5,50.6 61.5,54 65,54.5 71,54.2 73.5,53.6 76.9,54.3 80,50.8 83.5,51 87.3,49.1 91,50.5 98,50 98.3,52 102,51.4 106,50.3 113,49.6 117,49.8 120,53.2 125.6,53.1 128,49.6 131,47.8 134.8,48.4 133,45.1 131.2,44.8 130.6,42.4', '87.8,49 91,46.9 95.5,44.3 100,42.6 105,41.6 111,43.5 112,45 116,46.7 119.9,46.7 117,49.8', '124.3,40 127,41.7 130.6,42.4', '126.7,37.8 128.3,38.6', '109.6,2 112,1.4 115,4.3 117.6,4.2', '141,-2.6 141,-9.1',
]

const project = (pair: string): string => {
  const [lon, lat] = pair.split(',').map(Number)
  return `${(67 + (lon + 180) * 3.693).toFixed(1)} ${(378.5 - lat * 4.35).toFixed(1)}`
}
const outline = (ring: string): string => 'M' + ring.trim().split(' ').map(project).join('L')
const landPath = land.map((shape) => shape.split('|').map((r) => outline(r) + 'Z').join(''))
const borderPath = borders.map(outline).join('')
</script>

<template>
  <div class="window">
    <div class="app">
      <aside class="sidebar">
        <div class="brand">
          <a class="logo" href="#" aria-label="ThreatMon home">
            <svg class="eagle" viewBox="0 0 171 141" aria-hidden="true">
              <path d="M0 11C22 25 48 27 62 39C66 26 70 20 77 14L66 20C70 8 82 0 95 0C103 0 108 2 111 4L103 6C108 8 107 14 103 19C94 29 92 35 91 47L104 36C110 28 145 26 171 11C164 27 152 36 135 43C124 48 112 51 105 62L103 88L98 90L101 68C96 60 90 50 86 40C82 50 76 60 71 68L74 90L69 88L66 62C58 51 46 48 35 43C19 36 7 27 0 11Z" />
              <path d="M18 40C32 51 52 51 62 66L65 77C54 63 32 64 18 40Z" />
              <path d="M153 40C139 51 119 51 109 66L106 77C117 63 139 64 153 40Z" />
              <path d="M31 62C42 71 58 70 66 84L68 95C57 82 42 84 31 62Z" />
              <path d="M140 62C129 71 113 70 106 84L104 95C115 82 130 84 140 62Z" />
              <path d="M72 84L86 98L99 84L103 95L114 108L101 105L93 110L86 141L79 110L70 105L59 108L69 95Z" />
            </svg>
            <span>ThreatMon</span>
          </a>
          <button class="collapse" type="button" aria-label="Collapse sidebar">
            <svg viewBox="0 0 16 14" width="16" height="14"><path d="M7 1L1 7l6 6M15 1L9 7l6 6" /></svg>
          </button>
        </div>

        <nav class="nav">
          <div class="top-list">
            <a v-for="item in topItems" :key="item.id" class="pill tall" href="#">
              <span>{{ item.label }}</span>
              <svg v-if="item.id === 'ciso'" class="top-icon" viewBox="0 0 22 22">
                <path class="w" d="M1 9l5 2 6-5 4 2 5-6" /><path class="b" d="M1 18l5 2 5-4 5 1 5-3" />
                <g class="wf"><circle cx="1.5" cy="9" r="1.5" /><circle cx="20.5" cy="2.5" r="1.5" /></g>
              </svg>
              <svg v-else-if="item.id === 'hacker'" class="top-icon" viewBox="0 0 22 22">
                <path class="b" d="M1 7V1h6M15 1h6v6M21 15v6h-6M7 21H1v-6" /><path class="w" d="M4 11c4-6 10-6 14 0c-4 6-10 6-14 0z" /><circle class="wf" cx="11" cy="11" r="2" />
              </svg>
              <svg v-else class="top-icon" viewBox="0 0 22 22">
                <path class="b" d="M7 1c8-2 13 3 12 8l2 4-3 1c0 3-1 4-3 4v3M3 12c1 4 2 4 4 5v4M5 14l2 3" /><path class="w thin" d="M1 3h3l2 2h3M1 8l3-2h5" />
                <g class="wf"><circle cx="1.5" cy="3" r="1.5" /><circle cx="1.5" cy="8" r="1.5" /></g>
              </svg>
            </a>
          </div>

          <div class="divider"><span>END TO END INTELLIGENCE</span></div>

          <div class="section-list">
            <button v-for="item in sections" :key="item.id" class="pill" :class="{ open: item.open }" type="button">
              <svg class="sec-icon" viewBox="0 0 18 18">
                <g v-if="item.id === 'attack'"><circle cx="9" cy="9" r="5.5" /><path d="M9 1v3M9 14v3M1 9h3M14 9h3" /><circle class="fill" cx="9" cy="9" r="1" /></g>
                <g v-else-if="item.id === 'fraud'"><path d="M6 4C0 6 0 13 5 14c4 1 5-3 8-7M6 4v4M6 4L3 5M12 5l3-1 0 3-3 1zM15 4l2-1" /></g>
                <g v-else-if="item.id === 'dark'"><path d="M4 8V4q0-2 2-2h6q2 0 2 2v4M1 8h16" /><circle cx="5" cy="13" r="2.5" /><circle cx="13" cy="13" r="2.5" /><path d="M7.5 12.5h3" /></g>
                <g v-else-if="item.id === 'surface'" class="fine"><circle cx="9" cy="9" r="8" /><ellipse cx="9" cy="9" rx="4" ry="8" /><path d="M1.5 6h15M1.5 12h15" /></g>
                <g v-else>
                  <circle class="fine" cx="9" cy="10.5" r="3" />
                  <path v-for="a in [0, 120, 240]" :key="a" d="M6 1C3 4 5 8 9 8S15 4 12 1" :transform="`rotate(${a} 9 10)`" />
                </g>
              </svg>
              <span>{{ item.label }}</span>
              <svg class="chevron" viewBox="0 0 14 9"><path :d="item.open ? 'M1 8l6-6 6 6' : 'M1 1l6 6 6-6'" /></svg>
            </button>
          </div>

          <div v-for="g in groups" :key="g.title" class="group">
            <h3>{{ g.title }}</h3>
            <a v-for="l in g.links" :key="l" class="link" :class="{ active: l === activeLink }" href="#"><i></i>{{ l }}</a>
          </div>
        </nav>
      </aside>

      <div class="page">
        <header class="topbar">
          <label class="search">
            <svg viewBox="0 0 20 20" width="20" height="20"><circle cx="7.5" cy="7.5" r="6" /><path d="M12 12l7 7" /></svg>
            <input type="text" placeholder="Search Platform" aria-label="Search Platform" />
          </label>
          <div class="actions">
            <button class="foresight" type="button">
              <svg viewBox="0 0 18 22" width="18" height="22"><circle cx="9" cy="11" r="6" /><path d="M3 19h12M1 21h16M4 16l-1 3M14 16l1 3M7 2v1M10 3.5v1M2 5v1M16 6v1M9 1v1" /><path d="M6 10q1-2 3-2" /></svg>
              <span>Foresight</span>
            </button>
            <button class="company" type="button">
              <svg viewBox="0 0 20 20" width="20" height="20"><path d="M2 19V1h12v6M12 19V7h6v12M0 19h20M15 19v-6" /><path class="dots" d="M5 5h1.5M9 5h1.5M5 9h1.5M9 9h1.5M5 13h1.5M9 13h1.5M5 16h1.5" /></svg>
              <span>COMPANY</span>
              <svg class="caret" viewBox="0 0 12 8" width="12" height="8"><path d="M1 1l5 5 5-5" /></svg>
            </button>
            <div class="round-group">
              <button class="round bell" type="button" aria-label="Notifications">
                <svg viewBox="0 0 22 24" width="22" height="24"><path d="M2 18h18l-3-4V9c0-4-2-7-6-7S5 5 5 9v5z" /><path d="M9 21q2 2 4 0z" class="solid" /></svg>
                <span class="badge">5</span>
              </button>
              <button class="round" type="button" aria-label="Account">
                <svg viewBox="0 0 20 20" width="20" height="20"><circle class="solid" cx="10" cy="6" r="4" /><path class="solid" d="M1 18v-2c0-3 4-5 9-5s9 2 9 5v2z" /></svg>
              </button>
            </div>
          </div>
        </header>

        <main class="content">
          <div class="title-row">
            <h1>Ransomware Attacks</h1>
            <button class="subscribe" type="button">Subscribe</button>
          </div>

          <section class="card map-card">
            <svg class="map" viewBox="0 0 1538 540" role="img" aria-label="World map of ransomware attacks">
              <defs>
                <radialGradient id="glow"><stop offset="0" stop-color="#ef5b5b" stop-opacity=".18" /><stop offset="1" stop-color="#ef5b5b" stop-opacity=".02" /></radialGradient>
              </defs>
              <path v-for="(d, i) in landPath" :key="i" class="land" :d="d" />
              <path class="border" :d="borderPath" />
              <g v-for="(m, i) in markers" :key="i" class="marker">
                <circle class="halo" :cx="m[0]" :cy="m[1]" r="42" />
                <circle class="ring" :cx="m[0]" :cy="m[1]" r="27" />
                <circle class="core-ring" :cx="m[0]" :cy="m[1]" r="11" />
                <circle class="core" :cx="m[0]" :cy="m[1]" r="8" />
              </g>
            </svg>
            <div class="ticker">
              <div class="ticker-label"><i></i>TOP 20 COUNTRIES</div>
              <div class="ticker-view">
                <ul class="track">
                  <li v-for="t in ticker" :key="t.code">
                    <svg class="flag" viewBox="0 0 24 16">
                      <g v-if="t.code === 'de'"><path fill="#000" d="M0 0h24v6H0z" /><path fill="#c8281e" d="M0 5h24v6H0z" /><path fill="#f5cf3f" d="M0 11h24v5H0z" /></g>
                      <g v-else-if="t.code === 'ca'"><path fill="#fff" d="M0 0h24v16H0z" /><path fill="#e8392c" d="M0 0h6v16H0zM18 0h6v16h-6zM12 2l1 3 2-1-1 4 3-1-1 3-3 2h-1v2h-1v-2h-1l-2-2-1-3 3 1-1-4 2 1z" /></g>
                      <g v-else-if="t.code === 'fr'"><path fill="#0c2350" d="M0 0h8v16H0z" /><path fill="#fff" d="M8 0h8v16H8z" /><path fill="#d03a3a" d="M16 0h8v16h-8z" /></g>
                      <g v-else-if="t.code === 'it'"><path fill="#3f9a55" d="M0 0h8v16H0z" /><path fill="#fff" d="M8 0h8v16H8z" /><path fill="#cf4440" d="M16 0h8v16h-8z" /></g>
                      <g v-else-if="t.code === 'br'"><path fill="#3d9a40" d="M0 0h24v16H0z" /><path fill="#f3da3c" d="M12 2l9 6-9 6-9-6z" /><circle cx="12" cy="8" r="4" fill="#2b2f7c" /><path d="M8 7q5-1 8 3" stroke="#cdd6e8" fill="none" /></g>
                      <g v-else-if="t.code === 'in'"><path fill="#ef8040" d="M0 0h24v6H0z" /><path fill="#fff" d="M0 5h24v6H0z" /><path fill="#2f7d3a" d="M0 11h24v5H0z" /><circle cx="12" cy="8" r="2" fill="#a3a3d2" stroke="#5b5ba8" /></g>
                      <g v-else-if="t.code === 'au'"><path fill="#0a1560" d="M0 0h24v16H0z" /><path stroke="#fff" stroke-width="2" d="M0 0l12 8M12 0L0 8" /><path stroke="#fff" stroke-width="3" d="M6 0v8M0 4h12" /><path stroke="#dc3048" d="M6 0v8M0 4h12M0 0l12 8M12 0L0 8" /><g fill="#cfd6ee"><circle cx="6" cy="12" r="1.5" /><circle cx="18" cy="3" r="1" /><circle cx="21" cy="7" r="1" /><circle cx="15" cy="8" r="1" /><circle cx="18" cy="13" r="1" /></g></g>
                      <g v-else-if="t.code === 'es'"><path fill="#b5281c" d="M0 0h24v16H0z" /><path fill="#f3c33c" d="M0 4h24v8H0z" /><path fill="#a8522a" d="M6 6h4v4q-2 2-4 0z" /></g>
                      <g v-else-if="t.code === 'jp'"><path fill="#fff" d="M0 0h24v16H0z" /><circle cx="12" cy="8" r="5" fill="#b72233" /></g>
                      <g v-else><path fill="#1a2a78" d="M0 0h24v16H0z" /><path stroke="#fff" stroke-width="5" d="M12 0v16M0 8h24" /><path stroke="#cf2b3c" stroke-width="3" d="M12 0v16M0 8h24" /></g>
                    </svg>
                    <span class="name">{{ t.name }}</span><b>{{ t.value }}</b>
                  </li>
                </ul>
              </div>
            </div>
          </section>

          <section class="card chart-card">
            <div class="card-head">
              <h2>Total Attacks</h2>
              <div class="legend"><span>2025 - 8.4k</span><span class="now">2026 - 9.1k</span></div>
            </div>
            <svg class="chart" viewBox="0 0 1538 286" role="img" aria-label="Total attacks by month">
              <defs>
                <linearGradient id="areaCurrent" gradientUnits="userSpaceOnUse" x1="0" y1="56" x2="0" y2="205"><stop offset="0" stop-color="#6b78ea" stop-opacity=".6" /><stop offset=".35" stop-color="#5764d6" stop-opacity=".3" /><stop offset=".7" stop-color="#0e1650" stop-opacity=".25" /><stop offset="1" stop-color="#0a1048" stop-opacity="0" /></linearGradient>
                <linearGradient id="areaPrevious" gradientUnits="userSpaceOnUse" x1="0" y1="97" x2="0" y2="205"><stop offset="0" stop-color="#2a38c0" stop-opacity=".1" /><stop offset=".6" stop-color="#0a1048" stop-opacity=".1" /><stop offset="1" stop-color="#0a1048" stop-opacity="0" /></linearGradient>
              </defs>
              <path :d="areaPath(current)" fill="url(#areaCurrent)" />
              <path :d="areaPath(previous)" fill="url(#areaPrevious)" />
              <g class="axis y"><text v-for="t in ticks" :key="t" x="65" :y="py(t) + 6">{{ t.toLocaleString('en-US') }}</text></g>
              <g class="axis x"><text v-for="(m, i) in months" :key="m" :x="px(i)" y="249">{{ m }}</text></g>
              <g v-for="s in [current, previous]" :key="s.id" :class="s.id">
                <path class="line" :d="linePath(s)" />
                <circle v-for="(v, i) in s.values" :key="i" :cx="px(i)" :cy="py(v)" r="22" />
              </g>
              <g v-for="s in [previous, current]" :key="s.id" class="values" :class="s.id">
                <text v-for="(v, i) in s.values" :key="i" :x="px(i)" :y="py(v) + 5">{{ v }}</text>
              </g>
            </svg>
          </section>
        </main>
      </div>
    </div>
  </div>
</template>

<style>
body { background: #0d0d18; }
</style>

<style scoped>
* { box-sizing: border-box; }
.window { height: 100vh; padding: 6px 1px 2px 8px; overflow: hidden; background: #0d0d18; font-family: Inter, "Liberation Sans", sans-serif; color: #fff; }
.app { display: flex; height: 100%; overflow: hidden; }
button { font: inherit; color: inherit; background: none; border: 0; padding: 0; cursor: pointer; }
a { color: inherit; text-decoration: none; }
svg { display: block; flex: none; fill: none; stroke: none; }
h1, h2, h3, ul { margin: 0; padding: 0; font-weight: 500; }

.sidebar { flex: none; width: 316px; background: #040b35; overflow: hidden; }
.brand { display: flex; align-items: center; justify-content: space-between; height: 131px; padding: 0 24px 41px 25px; }
.logo { display: flex; align-items: center; gap: 5px; font-size: 21px; font-weight: 500; }
.eagle { width: 57px; height: 47px; fill: #3f86e0; }
.collapse svg { stroke: #c3c6d8; stroke-width: 2; }
.nav { padding-right: 19px; }
.top-list { display: flex; flex-direction: column; gap: 12px; }
.pill { display: flex; align-items: center; width: 100%; height: 43px; padding: 0 19px; border-radius: 0 22px 22px 0; background: #141a40; font-size: 17px; text-align: left; color: #eef0fa; }
.pill.tall { height: 45px; padding-left: 18px; justify-content: space-between; border-radius: 0 23px 23px 0; }
.pill.open { background: #191a47; }
.top-icon { width: 22px; height: 22px; stroke-width: 2; }
.w { stroke: #fff; }
.w.thin { stroke-width: 1; }
.wf { fill: #fff; }
.b { stroke: #3f86e0; }
.divider { display: flex; align-items: center; gap: 11px; height: 73px; margin-right: -2px; padding-top: 24px; font-size: 15px; color: #4c5176; white-space: nowrap; }
.divider::before, .divider::after { content: ""; flex: 1; height: 1px; background: #1c2247; }
.section-list { display: flex; flex-direction: column; gap: 7px; }
.sec-icon { width: 18px; height: 18px; margin-right: 10px; stroke: #fff; stroke-width: 1.5; }
.fine { stroke-width: 1; }
.fill { fill: #fff; }
.chevron { width: 14px; height: 9px; margin-left: auto; stroke: #fff; stroke-width: 2; }
.group { display: flex; flex-direction: column; gap: 7px; margin-top: 6px; }
.group h3 { display: flex; align-items: center; gap: 9px; height: 43px; font-size: 17px; font-weight: 600; color: #3f83d6; }
.group h3::before { content: ""; width: 7px; height: 1px; background: #3b6aa8; }
.link { display: flex; align-items: center; gap: 16px; height: 43px; padding-left: 24px; border-radius: 0 22px 22px 0; font-size: 17px; color: #eef0fa; }
.link i { width: 12px; height: 12px; border-left: 1px solid #7d82a8; border-bottom: 1px solid #7d82a8; }
.link.active { background: linear-gradient(90deg, #2f70dc 0%, #1b33d2 62%, #1a2ecf 100%); }
.link.active i { border-color: #fff; }

.page { flex: 1; min-width: 0; display: flex; flex-direction: column; }
.topbar { display: flex; align-items: center; justify-content: space-between; height: 86px; padding: 0 28px; background: #040b35; }
.search { display: flex; align-items: center; gap: 12px; width: 375px; height: 48px; padding: 0 13px; border: 1px solid #5c6080; border-radius: 7px; }
.search svg { stroke: #fff; stroke-width: 2.5; }
.search input { flex: 1; min-width: 0; border: 0; outline: 0; padding: 0; background: none; color: #fff; font: 16px "Liberation Sans", Arial, sans-serif; }
.search input::placeholder { color: #8b8fa6; opacity: 1; }
.actions { display: flex; align-items: center; font-size: 17px; }
.foresight { display: flex; align-items: center; justify-content: center; gap: 11px; width: 145px; height: 45px; border: 1px solid #3f86e0; border-radius: 23px; }
.foresight svg { stroke: #d7daea; }
.company { display: flex; align-items: center; gap: 12px; margin: 0 38px 0 31px; }
.company svg { stroke: #fff; stroke-width: 2; }
.company .caret { margin-left: 2px; }
.round-group { display: flex; gap: 14px; }
.round { position: relative; display: grid; place-items: center; width: 40px; height: 40px; border-radius: 50%; background: #21265a; }
.bell { border: 2px solid #7f84a3; background: #262b52; }
.bell svg { stroke: #fff; stroke-width: 2; }
.solid { fill: #fff; stroke: none; }
.badge { position: absolute; top: -7px; right: -6px; display: grid; place-items: center; width: 23px; height: 23px; border-radius: 50%; background: #f05c5c; font-size: 11px; }

.content { flex: 1; min-height: 0; padding: 27px 27px 0 28px; background: linear-gradient(97deg, #0d0e74 0%, #111576 25%, #192380 50%, #243a8c 74%, #2f4f98 100%); }
.title-row { display: flex; justify-content: space-between; align-items: flex-start; height: 59px; }
h1 { font-size: 20px; line-height: 32px; }
.subscribe { width: 121px; height: 41px; border: 1px solid #dfe3f2; border-radius: 7px; font-size: 17px; font-weight: 500; }
.card { border: 1px solid rgba(140, 150, 215, .35); border-radius: 8px; overflow: hidden; }
.map-card { position: relative; }
.map { width: 100%; height: auto; }
.land { fill: #0a134a; fill-rule: evenodd; stroke: #222c66; stroke-width: 1; stroke-linejoin: round; }
.border { stroke: #28316a; stroke-width: 1; }
.marker circle { fill: none; stroke: #ef5b5b; }
.marker .halo { stroke-opacity: .32; }
.marker .ring { fill: url(#glow); stroke-opacity: .65; }
.marker .core-ring { fill: #2a1440; stroke-opacity: .95; }
.marker .core { fill: #ef5b5b; stroke: none; }
.ticker { position: absolute; left: 0; right: 0; bottom: 0; display: flex; height: 45px; background: linear-gradient(rgba(6, 12, 64, .85), rgba(4, 11, 53, .95)); }
.ticker-label { flex: none; display: flex; align-items: center; gap: 7px; padding-left: 15px; width: 173px; background: #ee5c5c; font-size: 11px; font-weight: 700; letter-spacing: .12em; white-space: nowrap; }
.ticker-label i { width: 7px; height: 7px; border-radius: 50%; background: #ffd0cd; }
.ticker-view { flex: 1; min-width: 0; overflow: hidden; }
.track { display: flex; align-items: center; height: 100%; list-style: none; transform: translateX(-140px); }
.track li { flex: none; display: flex; align-items: center; height: 20px; padding: 0 24px; border-right: 1px solid #1f2862; font-size: 13px; }
.flag { width: 24px; height: 16px; margin-right: 8px; }
.name { color: #d6daec; }
.track b { margin-left: 9px; font-weight: 600; color: #ee6264; }
.chart-card { margin-top: 24px; }
.card-head { display: flex; align-items: center; justify-content: space-between; height: 50px; padding: 0 22px; border-bottom: 1px solid rgba(140, 150, 215, .3); }
h2 { font-size: 16px; }
.legend { display: flex; font-size: 16px; line-height: 20px; color: #8f9fce; }
.legend .now { margin-left: 8px; padding-left: 8px; border-left: 1px solid #b9c2e0; color: #fff; }
.chart { width: 100%; height: auto; font-family: "Liberation Sans", Arial, sans-serif; }
.axis { fill: #e9ebf8; font-size: 14px; text-anchor: middle; }
.axis.y { text-anchor: end; font-size: 15px; }
.line { stroke-width: 2; }
.current { stroke: #6f7df0; }
.previous { stroke: #2b40dc; }
.axis text { stroke: none; }
.current circle { fill: #0b102b; stroke-width: 2; }
.previous circle { fill: #030a38; stroke-width: 2; }
.values { stroke: none; fill: #fff; font-size: 13px; text-anchor: middle; }
.values.previous { fill: #8d92ad; }
</style>
